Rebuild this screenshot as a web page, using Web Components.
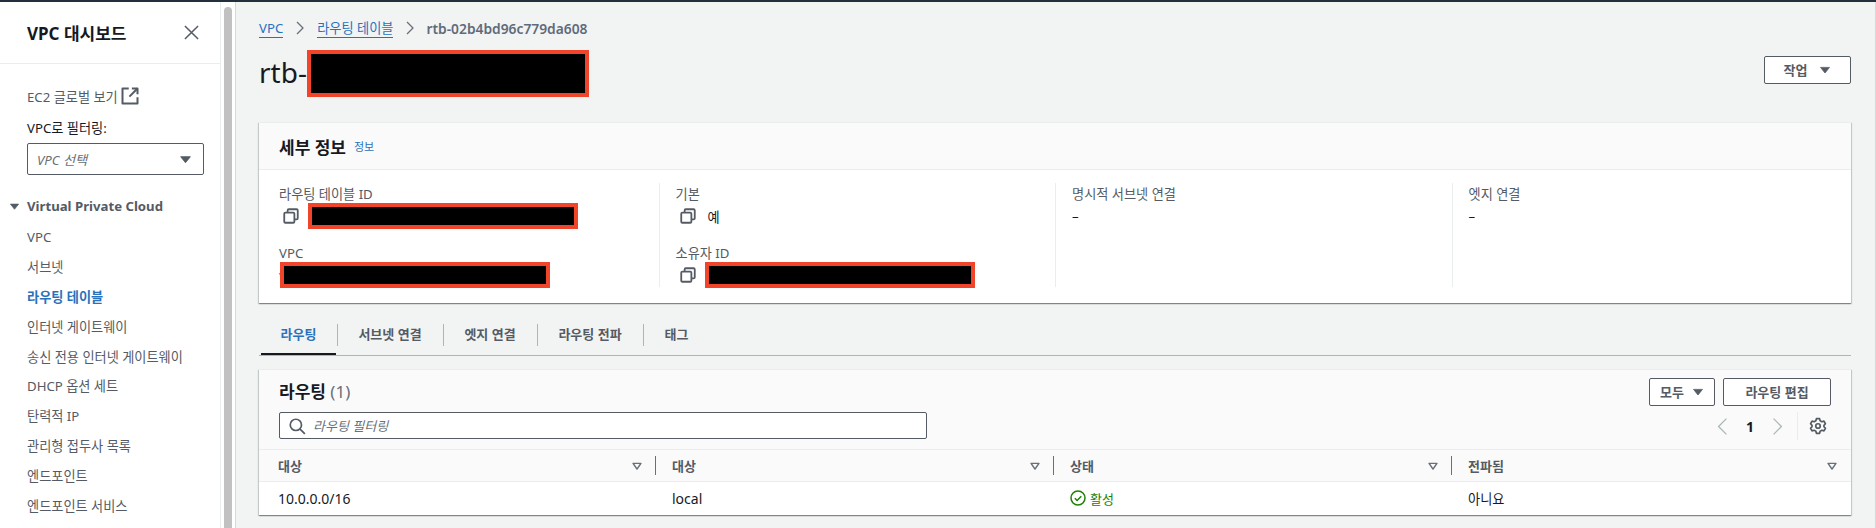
<!DOCTYPE html>
<html lang="ko">
<head>
<meta charset="utf-8">
<title>rtb</title>
<style>
  html, body { margin: 0; height: 528px; overflow: hidden; }
  body {
    font-family: "Noto Sans", "Noto Sans CJK KR", sans-serif;
    font-size: 13.2px;
    color: #16191f;
    background: #f2f3f3;
  }
  page-shell { height: 528px; }
</style>
</head>
<body>
<page-shell>
  <side-nav slot="side">
    <nav-item>VPC</nav-item>
    <nav-item>서브넷</nav-item>
    <nav-item active>라우팅 테이블</nav-item>
    <nav-item>인터넷 게이트웨이</nav-item>
    <nav-item>송신 전용 인터넷 게이트웨이</nav-item>
    <nav-item>DHCP 옵션 세트</nav-item>
    <nav-item>탄력적 IP</nav-item>
    <nav-item>관리형 접두사 목록</nav-item>
    <nav-item>엔드포인트</nav-item>
    <nav-item>엔드포인트 서비스</nav-item>
  </side-nav>

  <bread-crumbs></bread-crumbs>
  <page-title></page-title>
  <detail-card></detail-card>
  <tab-bar></tab-bar>
  <route-card></route-card>
</page-shell>

<script>
const ICONS = {
  close: '<path d="M3 3l10 10M13 3L3 13"/>',
  external: '<path d="M7 2H2v12h12V9"/><path d="M9.5 2H14v4.5"/><path d="M14 2L7.5 8.5"/>',
  copy: '<rect x="2" y="5" width="9" height="9" rx="1"/><path d="M5 5V3a1 1 0 0 1 1-1h7a1 1 0 0 1 1 1v7a1 1 0 0 1-1 1h-2"/>',
  search: '<circle cx="7" cy="7" r="5"/><path d="M10.7 10.7L15 15"/>',
  left: '<path d="M11 2L5 8l6 6"/>',
  right: '<path d="M5 2l6 6-6 6"/>',
  sort: '<path d="M3.5 5h9L8 11.5z"/>',
  caret: '<path d="M2 4.5h12L8 12z" fill="currentColor"/>',
  check: '<circle cx="8" cy="8" r="7"/><path d="M4.8 8.2l2.3 2.3 4.2-4.3"/>',
  gear: '<circle cx="8" cy="8" r="2"/><path d="M6.6 1.5h2.8l.5 1.9 1.5.8 1.9-.5 1.3 2.3-1.3 1.4v1.2l1.3 1.4-1.3 2.3-1.9-.5-1.5.8-.5 1.9H6.6l-.5-1.9-1.5-.8-1.9.5-1.3-2.3 1.3-1.4V7.4L1.4 6l1.3-2.3 1.9.5 1.5-.8z"/>'
};

class UiIcon extends HTMLElement {
  connectedCallback() {
    const size = this.getAttribute('size') || 16;
    const sw = this.getAttribute('stroke') || 2;
    this.attachShadow({ mode: 'open' });
    this.shadowRoot.innerHTML = `
      <style>
        :host { display: inline-flex; flex: none; color: ${this.getAttribute('color') || '#545b64'}; }
        svg { display: block; }
      </style>
      <svg xmlns="http://www.w3.org/2000/svg" width="${size}" height="${size}" viewBox="0 0 16 16" fill="none"
           stroke="currentColor" stroke-width="${sw}" stroke-linejoin="round">${ICONS[this.getAttribute('name')]}</svg>`;
  }
}
customElements.define('ui-icon', UiIcon);

class RedactBox extends HTMLElement {
  connectedCallback() {
    this.attachShadow({ mode: 'open' });
    this.shadowRoot.innerHTML = `
      <style>
        :host {
          display: block; box-sizing: border-box; flex: none; position: relative;
          width: ${this.getAttribute('w')}px; height: ${this.getAttribute('h')}px;
          background: #000; border: 4px solid #f0452a;
        }
      </style>`;
  }
}
customElements.define('redact-box', RedactBox);

class UiButton extends HTMLElement {
  connectedCallback() {
    this.attachShadow({ mode: 'open' });
    this.shadowRoot.innerHTML = `
      <style>
        :host {
          display: flex; box-sizing: border-box; align-items: center; justify-content: center; gap: 12px;
          height: 28px; background: #fff; border: 1px solid #545b64; border-radius: 2px;
          color: #545b64; font-size: 13px; font-weight: 700; line-height: 20px;
        }
      </style>
      <slot></slot>`;
  }
}
customElements.define('ui-button', UiButton);

class NavItem extends HTMLElement {
  connectedCallback() {
    this.attachShadow({ mode: 'open' });
    this.shadowRoot.innerHTML = `
      <style>
        :host { display: block; height: 29.9px; line-height: 29.9px; padding-left: 27px; color: #545b64; white-space: nowrap; }
        :host([active]) { color: #2a71bd; font-weight: 700; }
      </style>
      <slot></slot>`;
  }
}
customElements.define('nav-item', NavItem);

class SideNav extends HTMLElement {
  connectedCallback() {
    this.attachShadow({ mode: 'open' });
    this.shadowRoot.innerHTML = `
      <style>
        :host {
          display: flex; flex: none; width: 236px; box-sizing: border-box; height: 100%;
          background: #fff; border-right: 1px solid #d5dbdb; overflow: hidden;
        }
        .panel { width: 221px; flex: none; border-right: 1px solid #eaeded; height: 100%; box-sizing: border-box; overflow: hidden; }
        .head {
          display: flex; justify-content: space-between; align-items: center;
          height: 62px; box-sizing: border-box; padding: 0 18px 0 27px; border-bottom: 1px solid #eaeded;
          font-size: 17px; font-weight: 700;
        }
        .ec2 { display: flex; align-items: center; gap: 2px; height: 20px; margin: 22px 0 0 27px; color: #545b64; }
        .label { margin: 12px 0 0 27px; height: 20px; line-height: 20px; }
        .select {
          display: flex; align-items: center; justify-content: space-between; box-sizing: border-box;
          width: 177px; height: 32px; margin: 5px 0 0 27px; padding: 0 11px 0 9px;
          border: 1px solid #545b64; border-radius: 2px; color: #687078; font-style: italic;
        }
        .group {
          display: flex; align-items: center; gap: 7px; height: 20px; margin: 21px 0 7px 9px;
          color: #545b64; font-weight: 700; white-space: nowrap;
        }
        .track { flex: 1; padding: 5px 3px 0 3px; }
        .thumb { height: 100%; background: #c1c1c1; border-radius: 4px 4px 0 0; }
      </style>
      <div class="panel">
        <div class="head"><span>VPC 대시보드</span><ui-icon name="close" size="21" stroke="1.15"></ui-icon></div>
        <div class="ec2"><span>EC2 글로벌 보기</span><ui-icon name="external" size="20" stroke="1.6"></ui-icon></div>
        <div class="label">VPC로 필터링:</div>
        <div class="select"><span>VPC 선택</span><ui-icon name="caret" size="13" stroke="1"></ui-icon></div>
        <div class="group"><ui-icon name="caret" size="11" stroke="1"></ui-icon><span>Virtual Private Cloud</span></div>
        <slot></slot>
      </div>
      <div class="track"><div class="thumb"></div></div>`;
  }
}
customElements.define('side-nav', SideNav);

class BreadCrumbs extends HTMLElement {
  connectedCallback() {
    this.attachShadow({ mode: 'open' });
    this.shadowRoot.innerHTML = `
      <style>
        :host { display: flex; align-items: center; height: 20px; margin-top: 16px; gap: 9px; white-space: nowrap; }
        a { color: #2a71bd; border-bottom: 1px solid #2a71bd; line-height: 18px; }
        span { color: #5f6b7a; font-weight: 600; font-size: 13.8px; margin-left: -1px; }
      </style>
      <a>VPC</a><ui-icon name="right" size="16" stroke="1.3" color="#687078"></ui-icon>
      <a>라우팅 테이블</a><ui-icon name="right" size="16" stroke="1.3" color="#687078"></ui-icon>
      <span>rtb-02b4bd96c779da608</span>`;
  }
}
customElements.define('bread-crumbs', BreadCrumbs);

class PageTitle extends HTMLElement {
  connectedCallback() {
    this.attachShadow({ mode: 'open' });
    this.shadowRoot.innerHTML = `
      <style>
        :host { display: flex; align-items: flex-start; height: 47px; margin-top: 12px; }
        h1 { margin: 0; font-size: 28px; font-weight: 400; line-height: 44px; }
        .box { display: flex; }
        ui-button { width: 87px; margin-top: 6px; margin-left: auto; }
      </style>
      <div class="box"><h1>rtb-</h1><redact-box w="282" h="47"></redact-box></div>
      <ui-button>작업 <ui-icon name="caret" size="12" stroke="1"></ui-icon></ui-button>`;
  }
}
customElements.define('page-title', PageTitle);

class DetailField extends HTMLElement {
  connectedCallback() {
    this.attachShadow({ mode: 'open' });
    this.shadowRoot.innerHTML = `
      <style>
        :host { display: block; height: 45px; }
        .label { color: #545b64; height: 20px; line-height: 20px; }
        .value { display: flex; align-items: center; height: 26px; margin-top: -1px; color: #16191f; }
      </style>
      <div class="label">${this.getAttribute('label')}</div>
      <div class="value"><slot></slot></div>`;
  }
}
customElements.define('detail-field', DetailField);

class DetailCard extends HTMLElement {
  connectedCallback() {
    this.attachShadow({ mode: 'open' });
    this.shadowRoot.innerHTML = `
      <style>
        :host {
          display: block; box-sizing: border-box; height: 181px; margin-top: 25px; background: #fff;
          box-shadow: 0 1px 1px 0 rgba(0,28,36,.3), 1px 1px 1px 0 rgba(0,28,36,.15), -1px 1px 1px 0 rgba(0,28,36,.15);
          border-top: 1px solid #eaeded;
        }
        .head {
          display: flex; align-items: center; gap: 8px; height: 47px; box-sizing: border-box; padding: 0 0 0 20px;
          background: #fafafa; border-bottom: 1px solid #eaeded; font-size: 17px; font-weight: 700;
        }
        .head a { color: #2a71bd; font-size: 11px; font-weight: 400; }
        .grid { display: grid; grid-template-columns: repeat(4, 396.5px); padding: 13px 0 0 3px; }
        .col { height: 104px; box-sizing: border-box; padding: 1px 0 0 16px; border-left: 1px solid #eaeded; display: flex; flex-direction: column; gap: 14px; }
        .col:first-child { border-left: 0; padding-left: 17px; }
        .copy { margin: 0 8px 0 3px; }
        .yes { margin-left: 3px; }
        .vlink { color: #2a71bd; }
        .vlink + redact-box { margin-left: -6px; }
      </style>
      <div class="head"><span>세부 정보</span><a>정보</a></div>
      <div class="grid">
        <div class="col">
          <detail-field label="라우팅 테이블 ID"><ui-icon class="copy" name="copy" size="18" stroke="1.6"></ui-icon><redact-box w="270" h="26"></redact-box></detail-field>
          <detail-field label="VPC"><span class="vlink">v</span><redact-box w="270" h="26"></redact-box></detail-field>
        </div>
        <div class="col">
          <detail-field label="기본"><ui-icon class="copy" name="copy" size="18" stroke="1.6"></ui-icon><span class="yes">예</span></detail-field>
          <detail-field label="소유자 ID"><ui-icon class="copy" name="copy" size="18" stroke="1.6"></ui-icon><redact-box w="270" h="26"></redact-box></detail-field>
        </div>
        <div class="col"><detail-field label="명시적 서브넷 연결"><span>–</span></detail-field></div>
        <div class="col"><detail-field label="엣지 연결"><span>–</span></detail-field></div>
      </div>`;
  }
}
customElements.define('detail-card', DetailCard);

class TabBar extends HTMLElement {
  connectedCallback() {
    this.attachShadow({ mode: 'open' });
    const tabs = ['라우팅', '서브넷 연결', '엣지 연결', '라우팅 전파', '태그'];
    this.shadowRoot.innerHTML = `
      <style>
        :host {
          display: grid; grid-template-columns: 76px 106px 94px 106px 67px; box-sizing: border-box;
          height: 32px; margin-top: 21px; padding-left: 2px; border-bottom: 1px solid #aab7b8;
        }
        .tab { position: relative; height: 31px; box-sizing: border-box; text-align: center; }
        .tab span { display: block; height: 20px; line-height: 20px; color: #545b64; font-size: 13px; font-weight: 700; white-space: nowrap; }
        .tab + .tab::before { content: ""; position: absolute; left: 0; top: 0; width: 1px; height: 22px; background: #aab7b8; }
        .tab.on span { color: #2a71bd; }
        .tab.on { border-bottom: 2px solid #16191f; margin-right: 1px; }
      </style>
      ${tabs.map((t, i) => `<div class="tab ${i === 0 ? 'on' : ''}"><span>${t}</span></div>`).join('')}`;
  }
}
customElements.define('tab-bar', TabBar);

class ColHead extends HTMLElement {
  connectedCallback() {
    this.attachShadow({ mode: 'open' });
    this.shadowRoot.innerHTML = `
      <style>
        :host { display: flex; align-items: center; position: relative; box-sizing: border-box; height: 100%; padding: 0 12px 0 16px; color: #545b64; font-weight: 700; font-size: 13px; }
        :host(:first-child) { padding-left: 19px; }
        span { flex: 1; }
        .bar { position: absolute; right: 0; top: 6px; bottom: 6px; width: 1px; background: #687078; }
        :host(:last-child) .bar { display: none; }
      </style>
      <span><slot></slot></span><ui-icon name="sort" size="14" stroke="1.7" color="#687078"></ui-icon><i class="bar"></i>`;
  }
}
customElements.define('col-head', ColHead);

class RouteCard extends HTMLElement {
  connectedCallback() {
    this.attachShadow({ mode: 'open' });
    this.shadowRoot.innerHTML = `
      <style>
        :host {
          display: block; box-sizing: border-box; height: 146px; margin-top: 13px; background: #fff;
          box-shadow: 0 1px 1px 0 rgba(0,28,36,.3), 1px 1px 1px 0 rgba(0,28,36,.15), -1px 1px 1px 0 rgba(0,28,36,.15);
          border-top: 1px solid #eaeded;
        }
        .head { display: flex; height: 80px; box-sizing: border-box; padding: 8px 20px 0 20px; background: #fafafa; border-bottom: 1px solid #eaeded; }
        .left { flex: 1; }
        h2 { margin: 0; font-size: 17px; font-weight: 700; line-height: 27px; }
        h2 em { font-style: normal; font-weight: 400; color: #687078; }
        .filter {
          display: flex; align-items: center; gap: 7px; box-sizing: border-box; width: 648px; height: 27px; margin-top: 7px;
          padding-left: 8px; background: #fff; border: 1px solid #545b64; border-radius: 2px;
          color: #687078; font-style: italic; font-size: 13px;
        }
        .right { display: flex; flex-direction: column; align-items: flex-end; }
        .btns { display: flex; gap: 8px; }
        .all { width: 66px; gap: 8px; color: #545b64; }
        .edit { width: 108px; }
        .pager { display: flex; align-items: center; height: 28px; margin-top: 6px; }
        .pager b { width: 34px; text-align: center; font-size: 14px; }
        .pager i { width: 1px; height: 28px; background: #eaeded; margin: 0 11px 0 9px; }
        .pager .gear { margin-right: 4px; }
        .cols { display: grid; grid-template-columns: 397px 398px 398px 1fr; }
        .thead { height: 32px; background: #fafafa; border-bottom: 1px solid #eaeded; box-sizing: border-box; }
        .row { height: 32px; align-items: center; background: #fff; font-size: 14px; }
        .row div { padding-left: 16px; }
        .row div:first-child { padding-left: 19px; }
        .row .ko { font-size: 13.2px; }
        .ok { display: flex; align-items: center; gap: 4px; color: #1d8102; font-size: 13px; }
      </style>
      <div class="head">
        <div class="left">
          <h2>라우팅 <em>(1)</em></h2>
          <div class="filter"><ui-icon name="search" size="18" stroke="1.5"></ui-icon><span>라우팅 필터링</span></div>
        </div>
        <div class="right">
          <div class="btns">
            <ui-button class="all">모두 <ui-icon name="caret" size="12" stroke="1"></ui-icon></ui-button>
            <ui-button class="edit">라우팅 편집</ui-button>
          </div>
          <div class="pager">
            <ui-icon name="left" size="21" stroke="1" color="#aab7b8"></ui-icon><b>1</b><ui-icon name="right" size="21" stroke="1" color="#aab7b8"></ui-icon>
            <i></i><ui-icon class="gear" name="gear" size="18" stroke="1.5"></ui-icon>
          </div>
        </div>
      </div>
      <div class="cols thead">
        <col-head>대상</col-head><col-head>대상</col-head><col-head>상태</col-head><col-head>전파됨</col-head>
      </div>
      <div class="cols row">
        <div>10.0.0.0/16</div>
        <div>local</div>
        <div class="ok"><ui-icon name="check" size="16" stroke="1.5" color="#1d8102"></ui-icon><span>활성</span></div>
        <div class="ko">아니요</div>
      </div>`;
  }
}
customElements.define('route-card', RouteCard);

class PageShell extends HTMLElement {
  connectedCallback() {
    this.attachShadow({ mode: 'open' });
    this.shadowRoot.innerHTML = `
      <style>
        :host { display: flex; flex-direction: column; height: 528px; }
        .strip { height: 2px; background: #232f3e; flex: none; }
        .body { display: flex; flex: 1; min-height: 0; }
        main {
          flex: 1; min-width: 0; box-sizing: border-box; padding: 0 24px 0 23px;
          border-right: 1px solid #d5dbdb; overflow: hidden;
        }
      </style>
      <div class="strip"></div>
      <div class="body">
        <slot name="side"></slot>
        <main><slot></slot></main>
      </div>`;
  }
}
customElements.define('page-shell', PageShell);
</script>
</body>
</html>
